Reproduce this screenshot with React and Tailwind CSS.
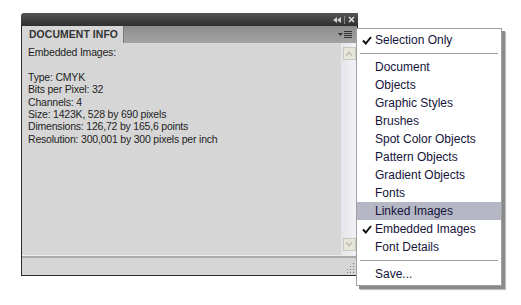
import React from 'react';

const infoLines = [
  'Type: CMYK',
  'Bits per Pixel: 32',
  'Channels: 4',
  'Size: 1423K, 528 by 690 pixels',
  'Dimensions: 126,72 by 165,6 points',
  'Resolution: 300,001 by 300 pixels per inch',
];

const menuItems = [
  { label: 'Document' },
  { label: 'Objects' },
  { label: 'Graphic Styles' },
  { label: 'Brushes' },
  { label: 'Spot Color Objects' },
  { label: 'Pattern Objects' },
  { label: 'Gradient Objects' },
  { label: 'Fonts' },
  { label: 'Linked Images', active: true },
  { label: 'Embedded Images', checked: true },
  { label: 'Font Details' },
];

function Check() {
  return (
    <svg width="10" height="9" viewBox="0 0 10 9" className="shrink-0">
      <path d="M1 4.5 L3.8 7.5 L9 1" fill="none" stroke="#111" strokeWidth="2" />
    </svg>
  );
}

function MenuRow({ label, checked, active }) {
  return (
    <div className={`flex items-center h-[18px] ${active ? 'bg-[#b6b7c5]' : ''}`}>
      <div className="w-[18px] flex justify-end pr-[3px]">{checked && <Check />}</div>
      <span>{label}</span>
    </div>
  );
}

function App() {
  return (
    <div className="relative w-[521px] h-[305px] bg-white overflow-hidden" style={{ fontFamily: '"Liberation Sans", Arial, sans-serif' }}>
      <div className="ml-[21px] mt-[13px] w-[337px] flex flex-col">
        {/* title bar */}
        <div className="h-[13px] rounded-tl-[3px] bg-gradient-to-b from-[#555] to-[#2f2f2f] flex items-center justify-end pr-[3px] gap-[3px] text-[#c8c8c8]">
          <svg width="8" height="6" viewBox="0 0 8 6">
            <path d="M4 0 L0 3 L4 6 Z M8 0 L4 3 L8 6 Z" fill="#cfcfcf" />
          </svg>
          <div className="w-px h-[8px] bg-[#888]" />
          <svg width="7" height="7" viewBox="0 0 7 7">
            <path d="M1 1 L6 6 M6 1 L1 6" stroke="#dcdcdc" strokeWidth="1.6" />
          </svg>
        </div>

        <div className="border-x border-b border-[#2b2b2b] flex flex-col">
          {/* tab bar */}
          <div className="h-[17px] bg-gradient-to-b from-[#8e8e8e] to-[#a3a3a3] flex items-stretch">
            <div className="w-[102px] bg-[#d6d6d6] border-r border-[#7a7a7a] flex items-center pl-[7px] text-[10.4px] font-bold text-[#333] tracking-[0.1px]">
              DOCUMENT INFO
            </div>
            <div className="flex-1" />
            <div className="flex items-center pr-[5px] gap-px">
              <svg width="5" height="3" viewBox="0 0 5 3"><path d="M0 0 H5 L2.5 3 Z" fill="#333" /></svg>
              <svg width="8" height="7" viewBox="0 0 8 7">
                <path d="M0 0.5 H8 M0 2.5 H8 M0 4.5 H8 M0 6.5 H8" stroke="#333" strokeWidth="1" />
              </svg>
            </div>
          </div>

          {/* content */}
          <div className="h-[212px] flex bg-[#d6d6d6]">
            <div className="flex-1 pl-[6px] pt-[2px] text-[10.5px] leading-[12.4px] tracking-[-0.2px] text-[#1e1e1e]">
              <div className="mt-[1px]">Embedded Images:</div>
              <div className="h-[12.4px]" />
              {infoLines.map((l) => (
                <div key={l}>{l}</div>
              ))}
            </div>
            <div className="w-[16px] bg-gradient-to-r from-[#e4e4ea] to-[#f3f3f7] flex flex-col justify-between items-center py-[4px]">
              <div className="w-[13px] h-[13px] bg-[#e6e6da] border border-[#c9c9bf] flex items-center justify-center">
                <svg width="8" height="5" viewBox="0 0 8 5"><path d="M1 4.5 L4 1.5 L7 4.5" fill="none" stroke="#bdbdb2" strokeWidth="1.6" /></svg>
              </div>
              <div className="w-[13px] h-[13px] bg-[#e6e6da] border border-[#c9c9bf] flex items-center justify-center">
                <svg width="8" height="5" viewBox="0 0 8 5"><path d="M1 0.5 L4 3.5 L7 0.5" fill="none" stroke="#bdbdb2" strokeWidth="1.6" /></svg>
              </div>
            </div>
          </div>

          {/* divider */}
          <div className="h-[1px] bg-[#eeeeee]" />
          <div className="h-[2px] bg-[#a7a9ad]" />

          {/* status bar */}
          <div className="h-[17px] bg-[#d6d6d6] flex items-end justify-end pr-[2px] pb-[2px]">
            <svg width="10" height="10" viewBox="0 0 10 10">
              {[[8, 0], [8, 3], [5, 3], [8, 6], [5, 6], [2, 6], [8, 9], [5, 9], [2, 9]].map(([x, y], i) => (
                <rect key={i} x={x} y={y} width="1" height="1" fill="#777" />
              ))}
            </svg>
          </div>
        </div>
      </div>

      {/* flyout menu */}
      <div className="absolute left-[356px] top-[28px] w-[146px] bg-white border border-[#a0a0a0] shadow-[3px_3px_0_#8a8a8a,4px_4px_1px_#c0c0c0] text-[12px] text-[#14143a] pt-[2px] pb-[2px]">
        <MenuRow label="Selection Only" checked />
        <div className="mx-[3px] my-[4px] h-px bg-[#a0a0a0]" />
        {menuItems.map((m) => (
          <MenuRow key={m.label} {...m} />
        ))}
        <div className="mx-[3px] my-[4px] h-px bg-[#a0a0a0]" />
        <MenuRow label="Save..." />
      </div>
    </div>
  );
}

export default App;
